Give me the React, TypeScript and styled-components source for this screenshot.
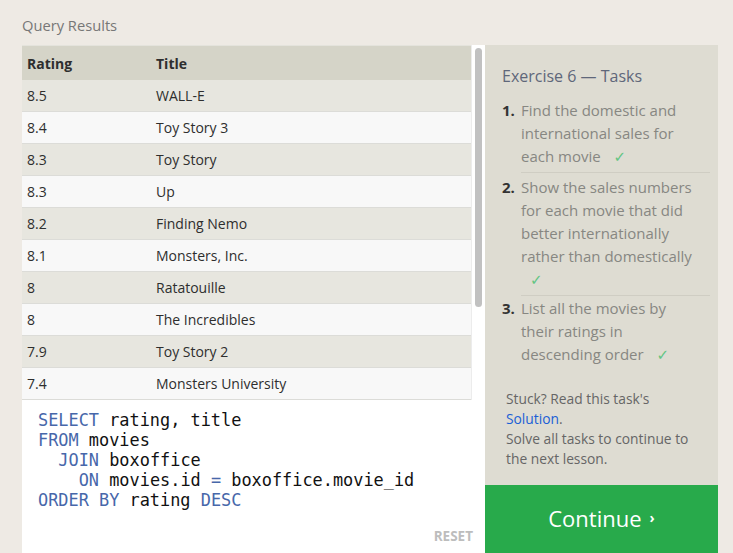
import React from "react";
import styled, { createGlobalStyle } from "styled-components";

const GlobalStyle = createGlobalStyle`
  html, body {
    margin: 0;
    padding: 0;
    background: #eeeae4;
    font-family: "Open Sans", "DejaVu Sans", sans-serif;
  }
  * { box-sizing: border-box; }
`;

const Page = styled.div`
  display: flex;
  height: 100vh;
  overflow: hidden;
  padding-left: 22px;
`;

const LeftColumn = styled.div`
  width: 463px;
  display: flex;
  flex-direction: column;
`;

const SectionLabel = styled.div`
  height: 45px;
  padding-top: 15px;
  line-height: 20px;
  font-size: 14.7px;
  color: #777;
`;

const Results = styled.div`
  height: 355px;
  display: flex;
  background: #fff;
`;

const Table = styled.div`
  flex: 1;
  overflow: hidden;
`;

const ScrollTrack = styled.div`
  width: 14px;
  padding: 3px 3px 0;
  background: #fff;
  border-left: 1px solid #ececec;
`;

const ScrollThumb = styled.div<{ $size: number }>`
  height: ${(p) => p.$size}px;
  border-radius: 4px;
  background: #c1c1c1;
`;

const Row = styled.div<{ $kind: "head" | "odd" | "even" }>`
  display: grid;
  grid-template-columns: 129px 1fr;
  height: ${(p) => (p.$kind === "head" ? "35px" : "32px")};
  border-top: ${(p) => (p.$kind === "head" ? "1px solid #e4e3dc" : "none")};
  border-bottom: ${(p) => (p.$kind === "head" ? "none" : "1px solid #dcdcd8")};
  background: ${(p) =>
    p.$kind === "head" ? "#d5d4c8" : p.$kind === "odd" ? "#e7e6df" : "#f8f8f8"};
  font-size: 14px;
  font-weight: ${(p) => (p.$kind === "head" ? 700 : 400)};
  color: #2e2e2e;
`;

const Cell = styled.div`
  display: flex;
  align-items: center;
  padding: 0 5px;
`;

const Editor = styled.div`
  flex: 1;
  background: #fff;
  display: flex;
  flex-direction: column;
  padding: 10px 12px 9px 16px;
`;

const Code = styled.pre`
  margin: 0;
  font-family: "DejaVu Sans Mono", monospace;
  font-size: 16.9px;
  line-height: 20px;
  color: #111;
`;

const Kw = styled.span`
  color: #4767aa;
`;

const ResetButton = styled.div`
  margin-top: auto;
  align-self: flex-end;
  font-size: 13.5px;
  font-weight: 700;
  color: #bdbdbd;
  line-height: 16px;
`;

const TaskPanel = styled.div`
  width: 233px;
  background: #dedcd2;
  margin-top: 45px;
  display: flex;
  flex-direction: column;
`;

const TaskBody = styled.div`
  padding: 21px 8px 0 17px;
`;

const TaskTitle = styled.h3`
  margin: 0 0 10px;
  font-size: 16px;
  line-height: 20px;
  font-weight: 400;
  color: #5f677a;
`;

const TaskItem = styled.div`
  display: flex;
`;

const TaskNumber = styled.div<{ $top: number }>`
  width: 19px;
  padding-top: ${(p) => p.$top}px;
  font-size: 15px;
  line-height: 23px;
  font-weight: 700;
  color: #333;
`;

const TaskText = styled.div<{ $last?: boolean; $top: number }>`
  flex: 1;
  padding: ${(p) => p.$top}px 8px 4px 0;
  font-size: 15px;
  line-height: 23px;
  color: #878782;
  border-bottom: ${(p) => (p.$last ? "none" : "1px solid #cfcdc3")};
`;

const Check = styled.span`
  display: inline-block;
  margin-left: 9px;
  color: #62c583;
  font-family: "DejaVu Sans", sans-serif;
  font-size: 15px;
  line-height: 1;
`;

const Hint = styled.div`
  margin-top: 19px;
  padding: 0 14px 0 4px;
  font-size: 13.8px;
  line-height: 20px;
  color: #666;
`;

const SolutionLink = styled.a`
  color: #1b5fd6;
  text-decoration: none;
`;

const ContinueButton = styled.div`
  margin-top: 16px;
  height: 80px;
  background: #28aa4b;
  color: #fff;
  font-size: 22px;
  display: flex;
  justify-content: center;
  padding-top: 18px;
  line-height: 30px;
`;

const Chevron = styled.span`
  font-size: 14px;
  margin-left: 8px;
  font-weight: 700;
`;

const rows: [string, string][] = [
  ["8.5", "WALL-E"],
  ["8.4", "Toy Story 3"],
  ["8.3", "Toy Story"],
  ["8.3", "Up"],
  ["8.2", "Finding Nemo"],
  ["8.1", "Monsters, Inc."],
  ["8", "Ratatouille"],
  ["8", "The Incredibles"],
  ["7.9", "Toy Story 2"],
  ["7.4", "Monsters University"],
  ["7.2", "Cars"],
  ["7.2", "Brave"],
  ["7.2", "A Bug's Life"],
  ["6.4", "Cars 2"],
];

const tasks = [
  "Find the domestic and international sales for each movie",
  "Show the sales numbers for each movie that did better internationally rather than domestically",
  "List all the movies by their ratings in descending order",
];

const VISIBLE = 355;
const CONTENT = 35 + rows.length * 32;

export default function App() {
  const thumb = Math.round(((VISIBLE - 3) * VISIBLE) / CONTENT);
  return (
    <>
      <GlobalStyle />
      <Page>
        <LeftColumn>
          <SectionLabel>Query Results</SectionLabel>
          <Results>
            <Table>
              <Row $kind="head">
                <Cell>Rating</Cell>
                <Cell>Title</Cell>
              </Row>
              {rows.map(([rating, title], i) => (
                <Row key={title} $kind={i % 2 === 0 ? "odd" : "even"}>
                  <Cell>{rating}</Cell>
                  <Cell>{title}</Cell>
                </Row>
              ))}
            </Table>
            <ScrollTrack>
              <ScrollThumb $size={thumb} />
            </ScrollTrack>
          </Results>
          <Editor>
            <Code>
              <Kw>SELECT</Kw> rating, title{"\n"}
              <Kw>FROM</Kw> movies{"\n"}
              {"  "}<Kw>JOIN</Kw> boxoffice{"\n"}
              {"    "}<Kw>ON</Kw> movies.id <Kw>=</Kw> boxoffice.movie_id{"\n"}
              <Kw>ORDER BY</Kw> rating <Kw>DESC</Kw>
            </Code>
            <ResetButton>RESET</ResetButton>
          </Editor>
        </LeftColumn>

        <TaskPanel>
          <TaskBody>
            <TaskTitle>Exercise 6 — Tasks</TaskTitle>
            {tasks.map((task, i) => {
              const top = i === 2 ? 1 : 3;
              return (
                <TaskItem key={i}>
                  <TaskNumber $top={top}>{i + 1}.</TaskNumber>
                  <TaskText $top={top} $last={i === tasks.length - 1}>
                    {task} <Check>✓</Check>
                  </TaskText>
                </TaskItem>
              );
            })}
            <Hint>
              Stuck? Read this task's
              <br />
              <SolutionLink href="#">Solution</SolutionLink>.
              <br />
              Solve all tasks to continue to the next lesson.
            </Hint>
          </TaskBody>
          <ContinueButton>
            Continue<Chevron>›</Chevron>
          </ContinueButton>
        </TaskPanel>
      </Page>
    </>
  );
}
